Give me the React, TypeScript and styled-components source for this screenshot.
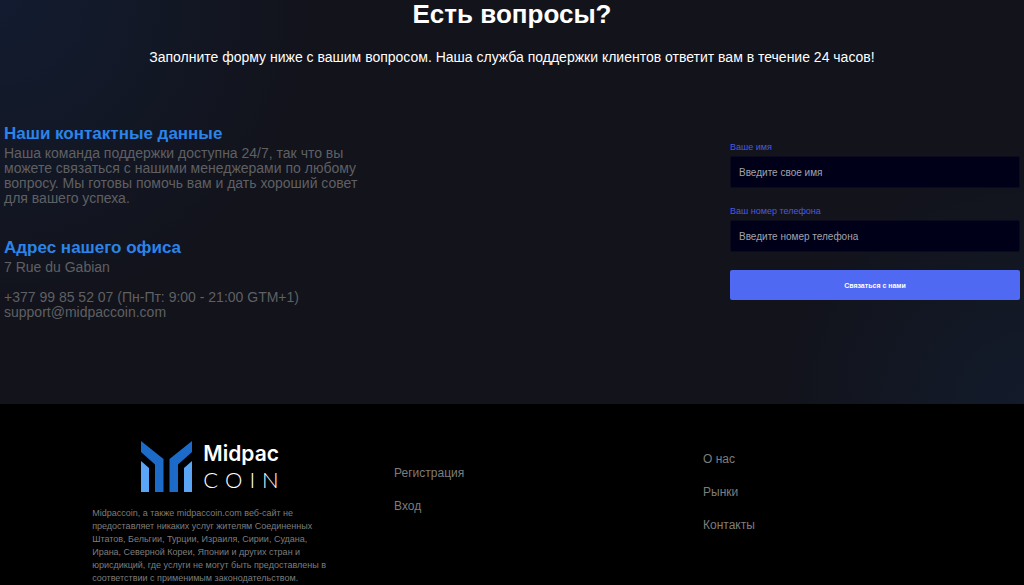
import React from "react";
import styled, { createGlobalStyle } from "styled-components";

const GlobalStyle = createGlobalStyle`
  *, *::before, *::after { box-sizing: border-box; }
  body {
    margin: 0;
    background: #000;
    font-family: "Liberation Sans", Arial, sans-serif;
  }
  h1, h2, p, ul, address { margin: 0; padding: 0; }
`;

const Questions = styled.section`
  padding: 0 4px 84px;
  background:
    radial-gradient(circle at 0 0, #121c30 0, rgba(18, 28, 48, 0) 320px),
    radial-gradient(circle at 100% 100%, #121b2b 0, rgba(18, 27, 43, 0) 250px),
    #12131b;
`;

const Title = styled.h1`
  color: #fff;
  font-size: 26px;
  line-height: 28px;
  text-align: center;
`;

const Lead = styled.p`
  margin-top: 19px;
  color: #fff;
  font-size: 14px;
  line-height: 20px;
  text-align: center;
`;

const Columns = styled.div`
  display: flex;
  justify-content: space-between;
  align-items: flex-start;
  gap: 24px;
  margin-top: 57px;
`;

const Contacts = styled.div`
  display: grid;
  gap: 17px;
  width: 372px;
`;

const Heading = styled.h2`
  color: #2b84ea;
  font-size: 17px;
  line-height: 20px;
`;

const Text = styled.p`
  color: #5f6063;
  font-size: 14px;
  line-height: 15px;
  margin: 2px 0 15px;
`;

const Office = styled.address`
  color: #5f6063;
  font-size: 14px;
  font-style: normal;
  line-height: 15px;
`;

const PlainLink = styled.a`
  color: inherit;
  text-decoration: none;
`;

const Form = styled.form`
  width: 290px;
  margin-top: 18px;
`;

const Field = styled.div`
  display: grid;
  gap: 3px;
  margin-bottom: 18px;
`;

const Label = styled.label`
  color: #4a5ae0;
  font-size: 9px;
  line-height: 11px;
`;

const Input = styled.input`
  width: 100%;
  height: 32px;
  padding: 0 8px;
  border: 1px solid #0b0b1d;
  border-radius: 2px;
  background: #000019;
  color: #fff;
  font: 10px "Liberation Sans", Arial, sans-serif;
  &::placeholder { color: #a3a3aa; opacity: 1; }
`;

const Submit = styled.button`
  width: 100%;
  height: 30px;
  border: 0;
  border-radius: 2px;
  background: #4f69f2;
  color: #fff;
  font: bold 7px "Liberation Sans", Arial, sans-serif;
`;

const Footer = styled.footer`
  display: grid;
  grid-template-columns: 302fr 309fr 321fr;
  padding: 37px 0 0 9%;
  background: #000;
  color: #7d7d7d;
`;

const Brand = styled.div`
  display: grid;
  gap: 14px;
  width: 236px;
`;

const Logo = styled.a`
  display: flex;
  justify-content: center;
  gap: 11px;
  color: #fff;
  text-decoration: none;
`;

const Wordmark = styled.span`
  display: grid;
  align-content: start;
`;

const LogoName = styled.span`
  font: 600 21px/26px Inter, sans-serif;
`;

const LogoCoin = styled.span`
  font: 300 22px/26px Lato, sans-serif;
  letter-spacing: 7px;
  margin-right: -7px;
`;

const Legal = styled.p`
  font-size: 9px;
  line-height: 13px;
`;

const Links = styled.ul<{ $top: number }>`
  display: grid;
  align-content: start;
  gap: 17px;
  margin-top: ${(p) => p.$top}px;
  list-style: none;
  font-size: 12px;
  line-height: 16px;
`;

function LogoMark() {
  return (
    <svg width="51" height="51" viewBox="0 0 51 51" aria-hidden="true">
      <path fill="#1d6bc9" d="M0 0 22.5 18V51H14V23.5L0 11Z" />
      <path fill="#1d6bc9" d="M51 0 28.5 18V51H37V23.5L51 11Z" />
      <path fill="#5aa5f5" d="M0 20 8 27V51H0Z" />
      <path fill="#5aa5f5" d="M51 20 43 27V51H51Z" />
    </svg>
  );
}

function LinkList({ top, items }: { top: number; items: string[] }) {
  return (
    <Links $top={top}>
      {items.map((item) => (
        <li key={item}>
          <PlainLink href="#">{item}</PlainLink>
        </li>
      ))}
    </Links>
  );
}

export default function App() {
  return (
    <>
      <GlobalStyle />
      <Questions>
        <Title>Есть вопросы?</Title>
        <Lead>
          Заполните форму ниже с вашим вопросом. Наша служба поддержки клиентов ответит вам в течение 24 часов!
        </Lead>
        <Columns>
          <Contacts>
            <div>
              <Heading>Наши контактные данные</Heading>
              <Text>
                Наша команда поддержки доступна 24/7, так что вы можете связаться с нашими менеджерами по
                любому вопросу. Мы готовы помочь вам и дать хороший совет для вашего успеха.
              </Text>
            </div>
            <div>
              <Heading>Адрес нашего офиса</Heading>
              <Office>
                <Text as="div">7 Rue du Gabian</Text>
                <PlainLink href="tel:+37799855207">+377 99 85 52 07 (Пн-Пт: 9:00 - 21:00 GTM+1)</PlainLink>
                <br />
                <PlainLink href="mailto:support@midpaccoin.com">support@midpaccoin.com</PlainLink>
              </Office>
            </div>
          </Contacts>
          <Form>
            <Field>
              <Label htmlFor="name">Ваше имя</Label>
              <Input id="name" type="text" placeholder="Введите свое имя" />
            </Field>
            <Field>
              <Label htmlFor="phone">Ваш номер телефона</Label>
              <Input id="phone" type="tel" placeholder="Введите номер телефона" />
            </Field>
            <Submit type="button">Связаться с нами</Submit>
          </Form>
        </Columns>
      </Questions>
      <Footer>
        <Brand>
          <Logo href="#">
            <LogoMark />
            <Wordmark>
              <LogoName>Midpac</LogoName>
              <LogoCoin>COIN</LogoCoin>
            </Wordmark>
          </Logo>
          <Legal>
            Midpaccoin, а также midpaccoin.com веб-сайт не предоставляет никаких услуг жителям Соединенных
            Штатов, Бельгии, Турции, Израиля, Сирии, Судана, Ирана, Северной Кореи, Японии и других стран и
            юрисдикций, где услуги не могут быть предоставлены в соответствии с применимым законодательством.
          </Legal>
        </Brand>
        <LinkList top={24} items={["Регистрация", "Вход"]} />
        <LinkList top={10} items={["О нас", "Рынки", "Контакты"]} />
      </Footer>
    </>
  );
}
